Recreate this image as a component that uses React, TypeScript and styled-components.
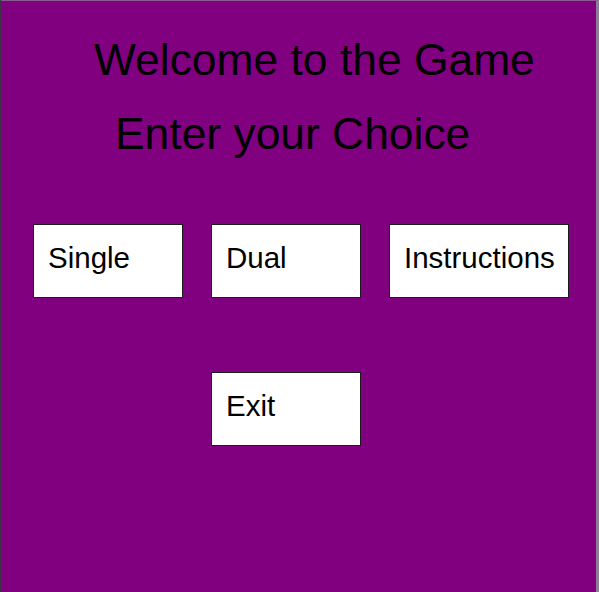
import React from 'react';
import styled, { createGlobalStyle } from 'styled-components';

const GlobalStyle = createGlobalStyle`
  html, body {
    margin: 0;
    padding: 0;
    background: #800080;
  }
  * {
    box-sizing: border-box;
  }
`;

const Screen = styled.div`
  display: flex;
  flex-direction: column;
  align-items: flex-start;
  min-height: 592px;
  background: #800080;
  border-top: 1px solid #8d5a8f;
  border-left: 2px solid #3a3347;
  border-right: 3px solid #8e7d98;
  font-family: 'Liberation Sans', Arial, sans-serif;
  color: #000;
`;

const Title = styled.h1<{ $indent: number; $gap: number }>`
  margin: ${(p) => p.$gap}px 0 0 ${(p) => p.$indent}px;
  padding: 0;
  font-size: 44.4px;
  line-height: 50px;
  font-weight: 400;
  white-space: nowrap;
`;

const Choices = styled.div`
  display: grid;
  grid-template-columns: 150px 150px 180px;
  column-gap: 28px;
  row-gap: 74px;
  margin: 65px 0 0 31px;
`;

const ChoiceButton = styled.button<{ $col?: number }>`
  grid-column: ${(p) => p.$col ?? 'auto'};
  display: flex;
  align-items: flex-start;
  height: 74px;
  padding: 16px 14px 0;
  margin: 0;
  background: #ffffff;
  border: 1px solid #1c1c1c;
  border-radius: 0;
  font-family: 'Liberation Sans', Arial, sans-serif;
  font-size: 29.5px;
  line-height: 33px;
  color: #000;
  text-align: left;
  white-space: nowrap;
  cursor: pointer;
`;

export default function App() {
  return (
    <>
      <GlobalStyle />
      <Screen>
        <Title $indent={92} $gap={34}>
          Welcome to the Game
        </Title>
        <Title $indent={113} $gap={24}>
          Enter your Choice
        </Title>
        <Choices>
          <ChoiceButton>Single</ChoiceButton>
          <ChoiceButton>Dual</ChoiceButton>
          <ChoiceButton>Instructions</ChoiceButton>
          <ChoiceButton $col={2}>Exit</ChoiceButton>
        </Choices>
      </Screen>
    </>
  );
}
